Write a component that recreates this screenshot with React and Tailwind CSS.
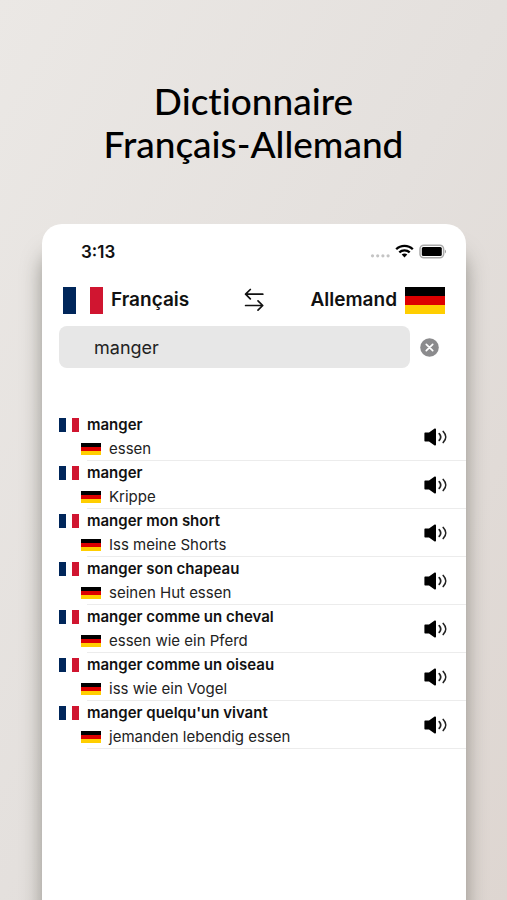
import React from "react";

const entries = [
  ["manger", "essen"],
  ["manger", "Krippe"],
  ["manger mon short", "Iss meine Shorts"],
  ["manger son chapeau", "seinen Hut essen"],
  ["manger comme un cheval", "essen wie ein Pferd"],
  ["manger comme un oiseau", "iss wie ein Vogel"],
  ["manger quelqu'un vivant", "jemanden lebendig essen"],
];

function FrenchFlag({ className }) {
  return (
    <span className={`flex shrink-0 ${className}`} aria-hidden="true">
      <span className="flex-1 bg-[#00265a]" />
      <span className="flex-1 bg-white" />
      <span className="flex-1 bg-[#d01530]" />
    </span>
  );
}

function GermanFlag({ className }) {
  return (
    <span className={`flex shrink-0 flex-col ${className}`} aria-hidden="true">
      <span className="flex-1 bg-black" />
      <span className="flex-1 bg-[#dd0000]" />
      <span className="flex-1 bg-[#ffce00]" />
    </span>
  );
}

function SwapIcon() {
  return (
    <svg width="20" height="24" viewBox="0 0 20 24" fill="none" stroke="#111" strokeWidth="1.7" strokeLinecap="round" strokeLinejoin="round">
      <path d="M18.800 6.200H1.600M6.300 1.500 1.600 6.200l4.700 4.700M1.600 17.500h17M14 12.800l4.700 4.700-4.700 4.700" />
    </svg>
  );
}

function SpeakerIcon() {
  return (
    <svg width="24" height="18" viewBox="0 0 24 18" fill="none">
      <path d="M1.400 4.600H5L10.300.8C11 .3 12 .7 12 1.600v14.800c0 .9-1 1.300-1.700.8L5 13.400H1.400C.8 13.400.4 13 .4 12.400V5.600c0-.6.4-1 1-1Z" fill="#000" />
      <path d="M15.200 5.600c1.800 2 1.800 4.800 0 6.800M19.200 3.500c3.300 3.300 3.300 7.700 0 11" stroke="#222" strokeWidth="1.700" strokeLinecap="round" />
    </svg>
  );
}

function StatusIcons() {
  return (
    <svg width="76" height="16" viewBox="0 0 76 16" fill="none" aria-hidden="true">
      <g fill="#c4c4c4">
        <circle cx="2.500" cy="11.800" r="1.600" />
        <circle cx="7.700" cy="11.800" r="1.600" />
        <circle cx="12.900" cy="11.800" r="1.600" />
        <circle cx="18.100" cy="11.800" r="1.600" />
      </g>
      <g stroke="#000" strokeWidth="2.300">
        <path d="M26.200 5.200c4.500-4.500 12.100-4.500 16.600 0" />
        <path d="M29.300 8.400c2.900-2.800 7.500-2.800 10.400 0" />
      </g>
      <path d="M31.700 10.500c1.600-1.400 4-1.400 5.600 0L34.500 13.400Z" fill="#000" />
      <rect x="50" y="1.200" width="23.600" height="12.600" rx="3.800" stroke="#aaa" strokeWidth="1.500" />
      <rect x="51.800" y="3" width="20" height="9" rx="1.500" fill="#000" />
      <path d="M74.900 5.700c1.400.5 1.400 3.300 0 3.800Z" fill="#999" />
    </svg>
  );
}

export default function App() {
  return (
    <div className="flex min-h-screen flex-col overflow-hidden bg-linear-to-br from-[#ebe8e5] via-[#e4e0dd] to-[#ded6d1] pt-[79px] font-['Inter','Liberation_Sans',sans-serif] text-[#111]">
      <h1 className="text-center font-['Lato','Liberation_Sans',sans-serif] text-[37px] leading-[43px] font-medium text-black [font-variant-ligatures:none]">
        Dictionnaire
        <br />
        Français-Allemand
      </h1>

      <main className="mr-[41px] ml-[42px] mt-[59px] flex-1 rounded-t-[20px] bg-white pb-10 shadow-[0_28px_20px_0px_rgba(70,70,60,0.5)]">
        <div className="flex items-center justify-between pt-4 pr-5 pl-[39px]">
          <span className="text-[17px] leading-6 font-semibold">3:13</span>
          <StatusIcons />
        </div>

        <div className="mt-[22px] grid h-[27px] grid-cols-[1fr_auto_1fr] items-center px-[21px] text-[19px] leading-7 font-semibold">
          <button className="flex items-center gap-2 justify-self-start">
            <FrenchFlag className="h-[27px] w-10" />
            Français
          </button>
          <button aria-label="Inverser les langues">
            <SwapIcon />
          </button>
          <button className="flex items-center gap-2 justify-self-end">
            Allemand
            <GermanFlag className="h-[27px] w-10" />
          </button>
        </div>

        <div className="mt-[13px] flex items-center gap-2.5 pr-[27px] pl-[17px]">
          <input
            type="text"
            aria-label="Rechercher"
            defaultValue="manger"
            className="h-[42px] min-w-0 flex-1 rounded-lg bg-[#e7e7e7] px-[35px] text-lg text-[#222] outline-none"
          />
          <button aria-label="Effacer">
            <svg width="19" height="19" viewBox="0 0 19 19" fill="none">
              <circle cx="9.500" cy="9.500" r="9.300" fill="#8b8b8d" />
              <path d="m6.300 6.300 6.400 6.400m0-6.400-6.400 6.400" stroke="#fff" strokeWidth="1.700" strokeLinecap="round" />
            </svg>
          </button>
        </div>

        <ul className="mt-[45px]">
          {entries.map(([french, german], index) => (
            <li key={index} className="flex h-12 pl-[17px]">
              <FrenchFlag className="mt-[5px] h-3.5 w-5" />
              <div className="ml-2 flex flex-1 items-center justify-between border-b border-[#ececec] pr-[18px]">
                <div className="-ml-2 pt-px text-[15px] leading-6">
                  <p className="pl-2 font-semibold">{french}</p>
                  <p className="flex items-center gap-2 pl-0.5 text-[#222]">
                    <GermanFlag className="h-[13px] w-5" />
                    {german}
                  </p>
                </div>
                <button aria-label={`Écouter ${french}`}>
                  <SpeakerIcon />
                </button>
              </div>
            </li>
          ))}
        </ul>
      </main>
    </div>
  );
}
